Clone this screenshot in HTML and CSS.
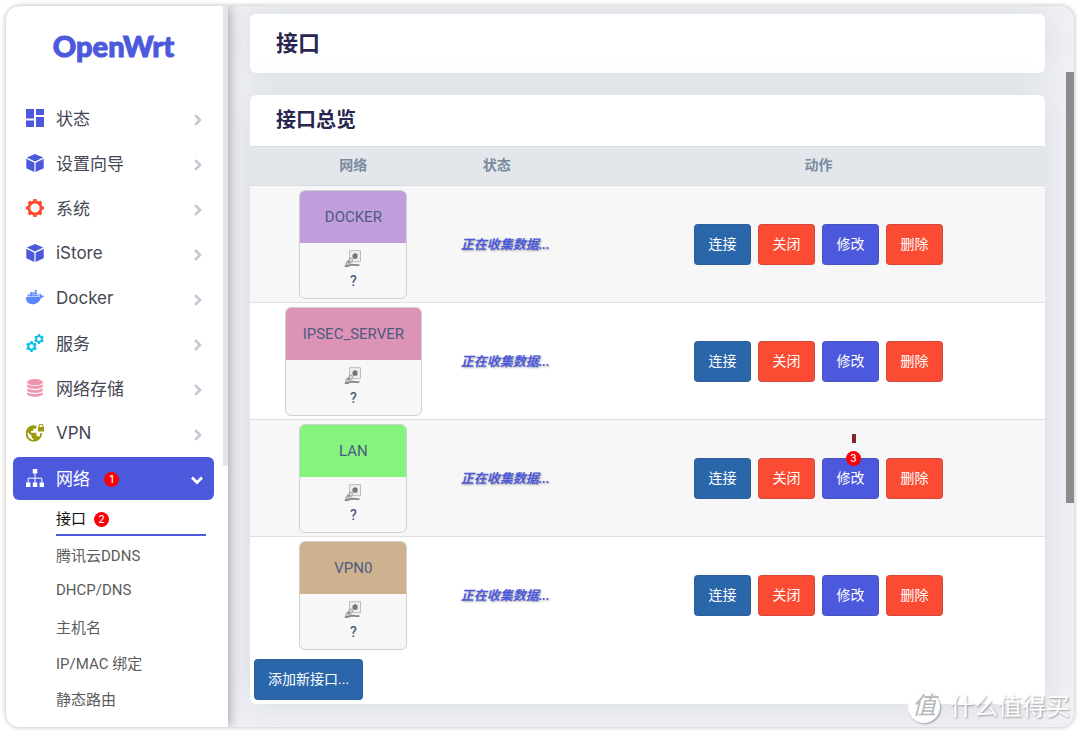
FILE: index.html
```html
<!DOCTYPE html>
<html lang="zh-CN">
<head>
<meta charset="utf-8">
<title>OpenWrt - 接口</title>
<link rel="stylesheet" href="styles.css">
</head>
<body>
<svg class="defs" aria-hidden="true">
  <symbol id="dash" viewBox="0 0 18 18"><path d="M0 0h8v9.500H0zM10 0h8v6h-8zM0 11.500h8V18H0zM10 8h8v10h-8z"/></symbol>
  <symbol id="cube" viewBox="0 0 18 18"><path d="M9 0 17.200 3.600 9 7.600.8 3.600zM.3 4.800 8.400 8.800V18L.3 14.200zM17.700 4.800 9.600 8.800V18l8.100-3.800z"/></symbol>
  <symbol id="gear" viewBox="0 0 18 18"><circle cx="9" cy="9" r="6" fill="none" stroke="currentColor" stroke-width="2.800"/><path d="M7.500 0h3l.5 3H7zM7 15h4l-.5 3h-3zM0 7.500 3 7v4l-3-.5zM18 7.500 15 7v4l3-.5zM1.600 3.700l2.100-2.100 2.300 1.700-2.700 2.700zM14.300 1.600l2.100 2.100-1.700 2.300L12 3.300zM1.600 14.300l2.100 2.100L6 14.700 3.300 12zM14.300 16.400l2.100-2.100-1.700-2.300-2.700 2.700z"/></symbol>
  <symbol id="whale" viewBox="0 0 19 18"><path d="M0 8h14.200c.4-.9.3-2.200-.3-3l.9-1c1 .8 1.500 1.700 1.600 2.500.9-.1 1.700 0 2.600.5-.5 1.300-1.600 1.900-3.200 1.900C14.300 13.200 11 15.500 7 15.500 2.500 15.500-.2 13 0 8zM1.700 5.200h2.200v2.200H1.700zM4.200 5.200h2.200v2.200H4.200zM6.700 5.200h2.200v2.200H6.700zM9.200 5.200h2.200v2.200H9.200zM11.700 5.200h1.600v2.200h-1.600zM4.200 2.800h2.200V5H4.200zM6.700 2.800h2.200V5H6.700zM9.200 2.800h2.200V5H9.200zM9.200.5h2.200v2H9.200z"/></symbol>
  <symbol id="cog6" viewBox="0 0 10 10"><circle cx="5" cy="5" r="2.900" fill="none" stroke="currentColor" stroke-width="1.900"/><path d="M4 0h2l.4 2H3.600zM3.600 8h2.800L6 10H4zM.2 3.400l1-1.700 2 .7-1.400 2.400zM9.800 3.400l-1-1.700-2 .7 1.400 2.400zM.2 6.600l1 1.700 2-.7-1.400-2.400zM9.800 6.600l-1 1.700-2-.7 1.400-2.400z"/></symbol>
  <symbol id="cogs" viewBox="0 0 18 18"><use href="#cog6" x="0" y="7" width="11" height="11"/><use href="#cog6" x="8" y="0" width="10" height="10"/></symbol>
  <symbol id="disks" viewBox="0 0 18 18"><ellipse cx="9" cy="3.200" rx="7.800" ry="3.100"/><path d="M1.200 5.300c3 2.400 12.600 2.400 15.600 0v2.200c-1.500 3.200-14.100 3.200-15.600 0zM1.200 9.300c3 2.400 12.600 2.400 15.600 0v2.200c-1.500 3.200-14.100 3.200-15.600 0zM1.200 13.300c3 2.400 12.600 2.400 15.600 0v2c-1.500 3.300-14.100 3.300-15.600 0z"/></symbol>
  <symbol id="globe" viewBox="0 0 18 18"><path d="M10.500 1.700A8.200 8.200 0 1 0 16 9h-1.700c0 1.700-.5 3-1.500 4.200-.3-.8-.8-1.200-1.600-1.200h-.8V9.500c0-.5-.3-.8-.8-.8H5V7h1.600c.5 0 .8-.3.800-.8V4.700H9c.9 0 1.500-.6 1.500-1.500zM7.300 16.200A6.500 6.500 0 0 1 1.800 8.300l3.900 3.800v.8c0 .9.700 1.600 1.600 1.600z" fill-rule="evenodd"/><path d="M12 3h.5V2.300a2.500 2.500 0 0 1 5 0V3h.5v4.500h-6zM13.500 3h3v-.7a1.500 1.500 0 0 0-3 0z" fill-rule="evenodd"/></symbol>
  <symbol id="tree" viewBox="0 0 18 18"><path d="M6.700 0h4.600v4.500H6.700zM0 13.500h4.400V18H0zM6.800 13.500h4.400V18H6.800zM13.600 13.500H18V18h-4.400z"/><path d="M9 4v10M2.200 14V9.200h13.600V14" fill="none" stroke="currentColor"/></symbol>
  <symbol id="right" viewBox="0 0 12 12"><path d="m5 2 4 4-4 4" fill="none" stroke="currentColor" stroke-width="2.600" stroke-linecap="square"/></symbol>
  <symbol id="down" viewBox="0 0 12 12"><path d="m2 4.500 4 4 4-4" fill="none" stroke="currentColor" stroke-width="2.800" stroke-linecap="square"/></symbol>
  <symbol id="port" viewBox="0 0 18 18"><path d="M5.500.7h11v11h-11z" fill="#eeeeea" stroke="#bdbdb9"/><path d="M8.500 4.200h5v3.600l-1 .9h-3l-1-.9z" fill="#777"/><path d="M10 3.500h2.500v1.200H10z" fill="#555"/><path d="M1 16.500c1-2.800 1.500-4.500 3-6l3-2.700 1.800 1.800-1.500 3-2.300 1.200z" fill="#ddd" stroke="#999"/><path d="M3.500 12.500 6 11M1 16.200c3 .6 4.500-1.500 7-1.600 2.500 0 4 .8 7.500.4" fill="none" stroke="#858585" stroke-width="1.600"/></symbol>
</svg>

<div class="frame">
  <aside class="sidebar">
    <a class="logo" href="#">OpenWrt</a>
    <nav>
      <ul class="menu">
        <li><a class="item" href="#"><svg class="ico blue"><use href="#dash"/></svg>状态<svg class="arrow"><use href="#right"/></svg></a></li>
        <li><a class="item" href="#"><svg class="ico blue"><use href="#cube"/></svg>设置向导<svg class="arrow"><use href="#right"/></svg></a></li>
        <li><a class="item" href="#"><svg class="ico red"><use href="#gear"/></svg>系统<svg class="arrow"><use href="#right"/></svg></a></li>
        <li><a class="item" href="#"><svg class="ico blue"><use href="#cube"/></svg>iStore<svg class="arrow"><use href="#right"/></svg></a></li>
        <li><a class="item" href="#"><svg class="ico sky"><use href="#whale"/></svg>Docker<svg class="arrow"><use href="#right"/></svg></a></li>
        <li><a class="item" href="#"><svg class="ico cyan"><use href="#cogs"/></svg>服务<svg class="arrow"><use href="#right"/></svg></a></li>
        <li><a class="item" href="#"><svg class="ico pink"><use href="#disks"/></svg>网络存储<svg class="arrow"><use href="#right"/></svg></a></li>
        <li><a class="item" href="#"><svg class="ico olive"><use href="#globe"/></svg>VPN<svg class="arrow"><use href="#right"/></svg></a></li>
        <li><a class="item open" href="#"><svg class="ico"><use href="#tree"/></svg>网络<span class="step">1</span><svg class="arrow"><use href="#down"/></svg></a></li>
      </ul>
      <ul class="submenu">
        <li><a class="sub current" href="#">接口<span class="step">2</span></a></li>
        <li><a class="sub" href="#">腾讯云DDNS</a></li>
        <li><a class="sub" href="#">DHCP/DNS</a></li>
        <li><a class="sub" href="#">主机名</a></li>
        <li><a class="sub" href="#">IP/MAC 绑定</a></li>
        <li><a class="sub" href="#">静态路由</a></li>
      </ul>
    </nav>
    <span class="side-thumb"></span>
  </aside>

  <main class="main">
    <section class="card"><h1>接口</h1></section>
    <section class="card">
      <h2>接口总览</h2>
      <table>
        <thead><tr><th class="c-net">网络</th><th class="c-state">状态</th><th class="c-act">动作</th></tr></thead>
        <tbody>
          <tr>
            <td><div class="iface"><div class="name docker">DOCKER</div><div class="dev"><svg><use href="#port"/></svg>?</div></div></td>
            <td class="state"><em>正在收集数据...</em></td>
            <td><div class="acts"><button class="btn link">连接</button><button class="btn danger">关闭</button><button class="btn edit">修改</button><button class="btn danger">删除</button></div></td>
          </tr>
          <tr>
            <td><div class="iface"><div class="name ipsec">IPSEC_SERVER</div><div class="dev"><svg><use href="#port"/></svg>?</div></div></td>
            <td class="state"><em>正在收集数据...</em></td>
            <td><div class="acts"><button class="btn link">连接</button><button class="btn danger">关闭</button><button class="btn edit">修改</button><button class="btn danger">删除</button></div></td>
          </tr>
          <tr>
            <td><div class="iface"><div class="name lan">LAN</div><div class="dev"><svg><use href="#port"/></svg>?</div></div></td>
            <td class="state"><em>正在收集数据...</em></td>
            <td><div class="acts"><button class="btn link">连接</button><button class="btn danger">关闭</button><span class="marked"><button class="btn edit">修改</button><span class="tick"></span><span class="step over">3</span></span><button class="btn danger">删除</button></div></td>
          </tr>
          <tr>
            <td><div class="iface"><div class="name vpn">VPN0</div><div class="dev"><svg><use href="#port"/></svg>?</div></div></td>
            <td class="state"><em>正在收集数据...</em></td>
            <td><div class="acts"><button class="btn link">连接</button><button class="btn danger">关闭</button><button class="btn edit">修改</button><button class="btn danger">删除</button></div></td>
          </tr>
        </tbody>
      </table>
      <div class="foot"><button class="btn link">添加新接口...</button></div>
    </section>
  </main>
  <span class="page-thumb"></span>
</div>
<div class="watermark"><span class="seal">值</span>什么值得买</div>
</body>
</html>
```
FILE: styles.css
```css
* { box-sizing: border-box; }
body {
  margin: 0;
  padding: 6px;
  min-height: 100vh;
  display: flex;
  background: #fff;
  color: #4f5a80;
  font-family: Roboto, "Noto Sans CJK SC", sans-serif;
  font-size: 14px;
}
ul { list-style: none; margin: 0; padding: 0; }
a { color: inherit; text-decoration: none; }
.defs { position: absolute; width: 0; height: 0; }

.frame {
  position: relative;
  flex: 1;
  display: flex;
  border-radius: 14px;
  overflow: hidden;
  background: #f0f1f5;
  box-shadow: 0 0 5px rgba(0, 0, 0, .3);
}

.sidebar {
  position: relative;
  z-index: 1;
  width: 222px;
  flex: none;
  padding: 0 14px 8px 7px;
  background: #fff;
  box-shadow: 0 0 12px rgba(0, 0, 0, .4);
}
.logo {
  display: block;
  height: 91px;
  padding-top: 22px;
  font: 900 29px/36px Lato, sans-serif;
  color: #4c59dc;
  text-align: center;
  -webkit-text-stroke: 1px #4c59dc;
}
.menu { display: grid; gap: 2px; }
.item {
  display: flex;
  align-items: center;
  height: 43px;
  padding: 0 11px 2px 13px;
  border-radius: 6px;
  font-family: Inter, "Noto Sans CJK SC", sans-serif;
  font-size: 17px;
  color: #444754;
}
.item.open { background: #4c59dc; color: #fff; }
.ico { width: 18px; height: 18px; margin-right: 12px; fill: currentColor; }
.arrow { width: 12px; height: 12px; margin-top: 4px; margin-left: auto; color: #c3c9d2; }
.open .arrow { color: #fff; }
.blue { color: #4c59dc; }
.red { color: #fb4b30; }
.sky { color: #5a87fb; }
.cyan { color: #12bfe8; }
.pink { color: #f095ab; }
.olive { color: #9a9a0b; }
.step {
  width: 15px;
  height: 15px;
  margin-top: 4px;
  margin-left: 14px;
  border-radius: 50%;
  background: #fb0007;
  color: #fff;
  font: 500 10px/15px Inter, sans-serif;
  text-align: center;
}
.submenu { padding: 0 8px 0 43px; }
.sub {
  display: flex;
  align-items: center;
  height: 36px;
  font-size: 15px;
  color: #5c5c5c;
}
.sub.current { color: #111; border-bottom: 2px solid #4c59dc; }
.sub .step { margin-left: 8px; }
.side-thumb {
  position: absolute;
  top: 0;
  right: 0;
  width: 5px;
  height: 460px;
  background: #e6e6e6;
}
.page-thumb {
  position: absolute;
  top: 66px;
  right: 0;
  width: 8px;
  height: 431px;
  background: #8c8c8c;
}

.main {
  flex: 1;
  min-width: 0;
  display: flex;
  flex-direction: column;
  gap: 22px;
  padding: 8px 29px 22px 22px;
}
.card {
  border-radius: 6px;
  background: #fff;
  box-shadow: 0 0 32px rgba(136, 152, 170, .25);
}
h1, h2 { margin: 0; padding: 0 26px; color: #29264f; }
h1 { font-size: 22px; line-height: 59px; }
h2 { font-size: 20px; line-height: 51px; }

table { width: 100%; border-collapse: separate; border-spacing: 0; table-layout: fixed; }
.c-net { width: 26%; }
.c-state { width: 17%; }
th {
  height: 40px;
  padding: 0 0 4px;
  border: 1px solid #d9dce0;
  border-width: 1px 0;
  background: #e3e7eb;
  color: #788a9e;
  font-size: 14px;
}
th.c-state { padding-left: 26px; text-align: left; }
td { height: 117px; padding: 4px 4px 3px; text-align: center; border-bottom: 1px solid #e0e0e0; }
tbody tr:nth-child(odd) { background: #f7f7f7; }
tr:last-child td { border-bottom-color: transparent; }
.iface {
  display: inline-block;
  vertical-align: top;
  min-width: 108px;
  border: 1px solid #d0d0d0;
  border-radius: 6px;
  overflow: hidden;
  background: #f7f7f7;
}
.name { padding: 0 17px; font-size: 15px; line-height: 52px; }
.docker { background: #bf9edb; }
.ipsec { background: #dc93b5; }
.lan { background: #85f47e; }
.vpn { background: #ccb28f; }
.dev {
  display: grid;
  justify-items: center;
  gap: 4px;
  padding: 7px 0 8px;
  font-size: 14px;
  font-weight: 500;
  line-height: 18px;
}
.dev svg { width: 18px; height: 18px; }
td.state { padding-bottom: 5px; text-align: left; }
.state em {
  color: #4c59dc;
  font-size: 13px;
  font-weight: 700;
  white-space: nowrap;
  text-shadow: 1px 1px 2px rgba(0, 0, 0, .35);
}
.acts { display: flex; justify-content: center; gap: 7px; }
.btn {
  min-width: 57px;
  height: 41px;
  padding: 0 13px 3px;
  border: 1px solid rgba(60, 60, 90, .2);
  border-radius: 4px;
  color: #fff;
  font: inherit;
}
.btn.link { background: #2a66aa; }
.btn.danger { background: #fb4b32; }
.btn.edit { background: #4c59dc; }
.marked { position: relative; }
.over { position: absolute; top: -7px; left: 24px; margin: 0; }
.tick {
  position: absolute;
  top: -24px;
  left: 30px;
  width: 4px;
  height: 9px;
  border: 1px solid #444;
  background: #d00;
}
.foot { padding: 5px 4px 4px; }
.foot .btn { display: block; }

.watermark {
  position: absolute;
  right: 10px;
  bottom: 8px;
  display: flex;
  align-items: center;
  gap: 10px;
  color: #fff;
  font-size: 24px;
  line-height: 36px;
  text-shadow: 1px 1px 2px rgba(0, 0, 0, .35);
}
.seal {
  width: 32px;
  height: 32px;
  border-radius: 50%;
  background: #fff;
  box-shadow: 1px 1px 2px rgba(0, 0, 0, .35);
  color: #b5b8bb;
  font-style: italic;
  line-height: 30px;
  text-align: center;
  text-shadow: none;
}
```
